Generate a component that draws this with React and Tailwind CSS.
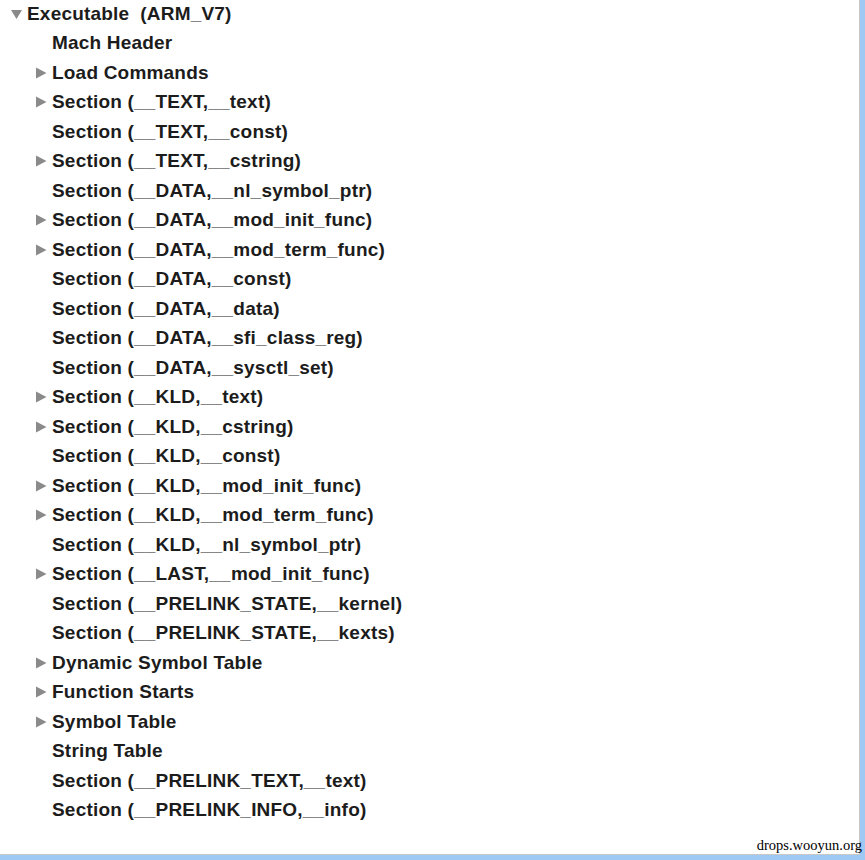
import React from 'react';

const rows = [
  { label: 'Mach Header', arrow: false },
  { label: 'Load Commands', arrow: true },
  { label: 'Section (__TEXT,__text)', arrow: true },
  { label: 'Section (__TEXT,__const)', arrow: false },
  { label: 'Section (__TEXT,__cstring)', arrow: true },
  { label: 'Section (__DATA,__nl_symbol_ptr)', arrow: false },
  { label: 'Section (__DATA,__mod_init_func)', arrow: true },
  { label: 'Section (__DATA,__mod_term_func)', arrow: true },
  { label: 'Section (__DATA,__const)', arrow: false },
  { label: 'Section (__DATA,__data)', arrow: false },
  { label: 'Section (__DATA,__sfi_class_reg)', arrow: false },
  { label: 'Section (__DATA,__sysctl_set)', arrow: false },
  { label: 'Section (__KLD,__text)', arrow: true },
  { label: 'Section (__KLD,__cstring)', arrow: true },
  { label: 'Section (__KLD,__const)', arrow: false },
  { label: 'Section (__KLD,__mod_init_func)', arrow: true },
  { label: 'Section (__KLD,__mod_term_func)', arrow: true },
  { label: 'Section (__KLD,__nl_symbol_ptr)', arrow: false },
  { label: 'Section (__LAST,__mod_init_func)', arrow: true },
  { label: 'Section (__PRELINK_STATE,__kernel)', arrow: false },
  { label: 'Section (__PRELINK_STATE,__kexts)', arrow: false },
  { label: 'Dynamic Symbol Table', arrow: true },
  { label: 'Function Starts', arrow: true },
  { label: 'Symbol Table', arrow: true },
  { label: 'String Table', arrow: false },
  { label: 'Section (__PRELINK_TEXT,__text)', arrow: false },
  { label: 'Section (__PRELINK_INFO,__info)', arrow: false },
];

// disclosure triangle, grey like the Finder outline view
const Arrow = ({ down }) => (
  <svg width="11" height="12" viewBox="0 0 11 12" className="shrink-0">
    {down ? (
      <polygon points="0,2 11,2 5.5,11" fill="#8a8a8a" />
    ) : (
      <polygon points="0,0.5 10.5,6 0,11.5" fill="#8a8a8a" />
    )}
  </svg>
);

const App = () => {
  return (
    <div className="w-[865px] h-[860px] bg-[#9ec9f5] overflow-hidden">
      <div className="w-[860px] h-[856px] bg-white border-r border-b border-[#c8c8c8] relative">
        <div className="font-['Liberation_Sans',Arial,sans-serif] font-bold text-[19px] tracking-[0.2px] text-[#1c1c1c]">
          {/* root node */}
          <div className="h-[29.5px] flex items-center -mt-[1px]">
            <div className="w-[27px] flex justify-end pr-[5px]">
              <Arrow down />
            </div>
            <span>Executable&nbsp;&nbsp;(ARM_V7)</span>
          </div>

          {rows.map((row) => (
            <div key={row.label} className="h-[29.5px] flex items-center">
              <div className="w-[52px] flex justify-end pr-[5px]">
                {row.arrow && <Arrow />}
              </div>
              <span>{row.label}</span>
            </div>
          ))}
        </div>

        <span className="absolute right-[-3px] bottom-[2px] leading-none font-['Liberation_Serif',serif] text-[14.5px] text-black">
          drops.wooyun.org
        </span>
      </div>
    </div>
  );
};

export default App;
